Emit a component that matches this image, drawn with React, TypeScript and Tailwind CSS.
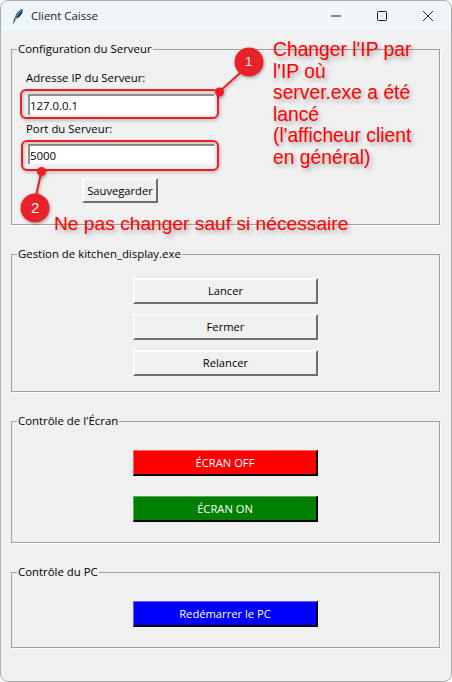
import type { ReactNode } from "react";

const UI_FONT = "font-['Open_Sans','Noto_Sans',sans-serif]";

function Group({ title, className, children }: { title: string; className: string; children: ReactNode }) {
  return (
    <section className={"relative border border-[#a0a0a0] shadow-[1px_1px_0_#fff] " + className}>
      <span className="absolute left-[5px] top-[-9px] bg-[#f0f0f0] px-px text-[11.4px] leading-[16px] text-black">{title}</span>
      {children}
    </section>
  );
}

function TkButton({ label, color }: { label: string; color?: "red" | "green" | "blue" }) {
  const styles = {
    red: "bg-[#ff0000] text-white border-t border-l border-r-2 border-b-2 border-t-[#ff6060] border-l-[#ff6060] border-r-black border-b-black",
    green: "bg-[#008000] text-white border-t border-l border-r-2 border-b-2 border-t-[#60a860] border-l-[#60a860] border-r-black border-b-black",
    blue: "bg-[#0000ff] text-white border-t border-l border-r-2 border-b-2 border-t-[#6060ff] border-l-[#6060ff] border-r-black border-b-black",
  };
  return (
    <button className={"mx-auto block h-[26px] w-[185px] text-center text-[11.2px] leading-[20px] " + (color ? styles[color] : "border-2 border-t-[#fcfcfc] border-l-[#fcfcfc] border-r-[#6e6e6e] border-b-[#6e6e6e] bg-[#f0f0f0] text-black")}>
      {label}
    </button>
  );
}

function Field({ label, value, className, inputClass }: { label: string; value: string; className: string; inputClass: string }) {
  return (
    <div className={className}>
      <div className="ml-[14px] text-[11.4px] leading-[16px] text-black">{label}</div>
      <div className={"ml-[16px] w-[186px] border-t-2 border-l-2 border-t-[#8f8f8f] border-l-[#8f8f8f] bg-white text-[11.4px] leading-[19px] text-black " + inputClass}>{value}</div>
    </div>
  );
}

const noteClass = "pointer-events-none absolute font-['Liberation_Sans',sans-serif] text-[#ff0000] [text-shadow:2px_3px_4px_rgba(0,0,0,0.3)]";

export default function App() {
  return (
    <div className={"relative h-[682px] w-[452px] overflow-hidden rounded-[8px] border border-[#ababab] bg-[#f0f0f0] " + UI_FONT}>
      <header className="flex h-[30px] items-center bg-[#eef6f9] pl-[11px]">
        <svg width="12" height="16" viewBox="0 0 12 16" className="shrink-0">
          <path d="M1.2 15.5C2 10 4 4 10.5 .8 11.5 5 8.5 9.5 3.8 10.8 3 12.5 2.4 14 2 15.5Z" fill="#1d3f66" />
          <path d="M3 11C4.5 7.5 6.5 5 9.5 2.5" stroke="#7fb6e8" strokeWidth="1" fill="none" />
        </svg>
        <span className="ml-[7px] text-[11.4px] leading-[16px] text-[#1a1a1a]">Client Caisse</span>
        <div className="ml-auto flex items-center text-[#1a1a1a]">
          <svg width="46" height="30" viewBox="0 0 46 30"><path d="M18 15h10" stroke="currentColor" strokeWidth="1" /></svg>
          <svg width="46" height="30" viewBox="0 0 46 30"><rect x="18.5" y="10.5" width="9" height="9" rx="1" fill="none" stroke="currentColor" strokeWidth="1" /></svg>
          <svg width="46" height="30" viewBox="0 0 46 30"><path d="M18 10l10 10M28 10L18 20" stroke="currentColor" strokeWidth="1" /></svg>
        </div>
      </header>

      <main className="flex flex-col gap-[29px] pl-[10px] pr-[11px] pt-[18px]">
        <Group title="Configuration du Serveur" className="h-[176px] w-[429px]">
          <Field label="Adresse IP du Serveur:" value="127.0.0.1" className="pt-[20px]" inputClass="mt-[8px] h-[21px]" />
          <Field label="Port du Serveur:" value="5000" className="mt-[6px]" inputClass="mt-[7px] h-[20px]" />
          <button className="ml-[70px] mt-[14px] block h-[25px] w-[76px] border-2 border-t-[#fcfcfc] border-l-[#fcfcfc] border-r-[#6e6e6e] border-b-[#6e6e6e] text-center text-[11.2px] leading-[19px] text-black">Sauvegarder</button>
        </Group>

        <Group title="Gestion de kitchen_display.exe" className="h-[138px] w-[429px]">
          <div className="flex flex-col gap-[10px] pt-[23px]">
            <TkButton label="Lancer" />
            <TkButton label="Fermer" />
            <TkButton label="Relancer" />
          </div>
        </Group>

        <Group title="Contrôle de l'Écran" className="h-[122px] w-[429px]">
          <div className="flex flex-col gap-[20px] pt-[28px]">
            <TkButton label="ÉCRAN OFF" color="red" />
            <TkButton label="ÉCRAN ON" color="green" />
          </div>
        </Group>

        <Group title="Contrôle du PC" className="h-[76px] w-[429px]">
          <div className="pt-[28px]">
            <TkButton label="Redémarrer le PC" color="blue" />
          </div>
        </Group>
      </main>

      {/* annotations posees par dessus la capture */}
      <svg width="452" height="682" viewBox="0 0 452 682" className="pointer-events-none absolute left-[-1px] top-[-1px]">
        <defs>
          <filter id="sh" x="-30%" y="-30%" width="160%" height="160%">
            <feDropShadow dx="1" dy="1.5" stdDeviation="1.5" floodColor="#000" floodOpacity="0.3" />
          </filter>
        </defs>
        <g filter="url(#sh)" fill="none" stroke="#ee1c25" strokeWidth="2">
          <rect x="21" y="90" width="197" height="28" rx="5" />
          <rect x="22" y="141" width="196" height="29" rx="5" />
          <path d="M219 92L240 73M41.5 171L36 196" />
        </g>
        <g filter="url(#sh)">
          <circle cx="219.5" cy="92" r="4.5" fill="#ee1c25" />
          <circle cx="41.5" cy="171.5" r="4.5" fill="#ee1c25" />
          <circle cx="249" cy="62" r="14.5" fill="#e8222a" />
          <circle cx="35" cy="208" r="14.5" fill="#e8222a" />
        </g>
      </svg>
      <span className="absolute left-[244px] top-[52px] font-['Liberation_Sans',sans-serif] text-[13px] leading-[18px] text-[#ffe8e8]">1</span>
      <span className="absolute left-[30px] top-[198px] font-['Liberation_Sans',sans-serif] text-[15px] leading-[18px] text-[#ffe8e8]">2</span>
      <div className={noteClass + " left-[272px] top-[38px] w-[170px] text-[19.3px] leading-[21.5px]"}>
        Changer l'IP par<br />l'IP où<br />server.exe a été<br />lancé<br />(l'afficheur client<br />en général)
      </div>
      <div className={noteClass + " left-[53px] top-[212px] whitespace-nowrap text-[19.2px] leading-[22px]"}>Ne pas changer sauf si nécessaire</div>
    </div>
  );
}
